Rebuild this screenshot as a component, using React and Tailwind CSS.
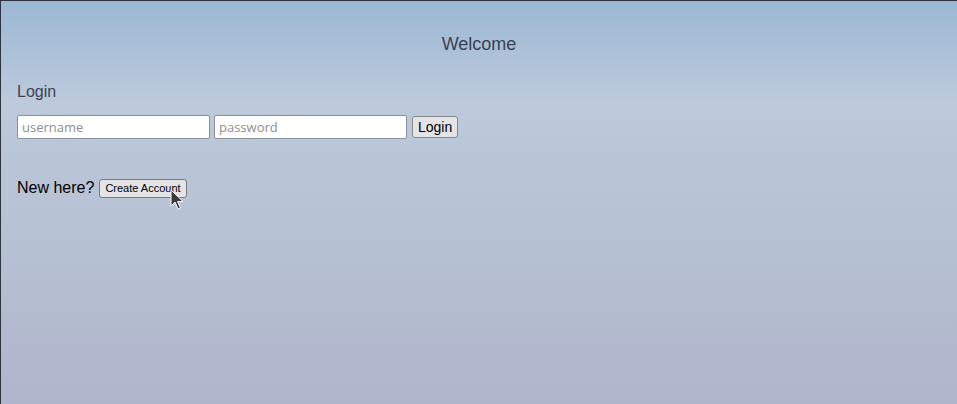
import React from "react";

const Cursor = () => (
  <svg className="absolute left-[169px] top-[188px]" width="14" height="22" viewBox="0 0 14 22">
    <path d="M1 1 L1 17 L5 13 L8 20 L10.5 19 L7.5 12.5 L13 12.5 Z" fill="#3a3a3a" stroke="#ffffff" strokeWidth="1" strokeLinejoin="round" />
  </svg>
);

export default function App() {
  return (
    <div className="relative w-full h-[404px] border-t border-l border-[#2e3440] bg-linear-to-b from-[#9ab8d3] via-[#bccadb] via-25% to-[#b0b5cb] font-['Liberation_Sans',sans-serif]">
      <h1 className="pt-[31px] text-center text-[18px] leading-6 text-[#3b4252]">Welcome</h1>

      <div className="px-4 pt-6">
        <h2 className="text-[16px] leading-6 text-[#3b4252]">Login</h2>
        <div className="flex items-center gap-1 mt-[11px]">
          <input
            placeholder="username"
            className="w-[193px] h-6 px-1 bg-white border border-[#8a8f9c] rounded-[2px] text-[13px] font-['Open_Sans',sans-serif] placeholder-[#8f8f8f] outline-none"
          />
          <input
            type="password"
            placeholder="password"
            className="w-[193px] h-6 px-1 bg-white border border-[#8a8f9c] rounded-[2px] text-[13px] font-['Open_Sans',sans-serif] placeholder-[#8f8f8f] outline-none"
          />
          <button className="ml-[1px] h-[22px] px-[5px] bg-[#e4e4e6] border border-[#8a8a8a] rounded-[3px] text-[14px] leading-none text-black">
            Login
          </button>
        </div>

        <div className="flex items-center gap-[5px] mt-[37px]">
          <span className="text-[16px] text-black">New here?</span>
          <button className="h-[19px] px-[5px] bg-[#e4e4e6] border border-[#7a7a7a] rounded-[3px] text-[11px] leading-none text-black">
            Create Account
          </button>
        </div>
      </div>

      <Cursor />
    </div>
  );
}
